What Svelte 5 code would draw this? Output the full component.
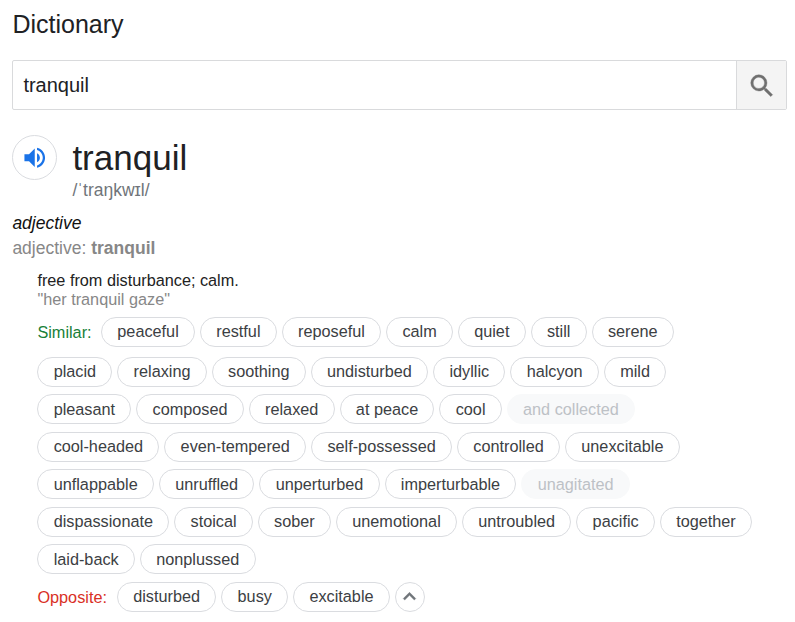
<script>
  const similar = [
    ['peaceful', 'restful', 'reposeful', 'calm', 'quiet', 'still', 'serene'],
    ['placid', 'relaxing', 'soothing', 'undisturbed', 'idyllic', 'halcyon', 'mild'],
    ['pleasant', 'composed', 'relaxed', 'at peace', 'cool', 'and collected'],
    ['cool-headed', 'even-tempered', 'self-possessed', 'controlled', 'unexcitable'],
    ['unflappable', 'unruffled', 'unperturbed', 'imperturbable', 'unagitated'],
    ['dispassionate', 'stoical', 'sober', 'unemotional', 'untroubled', 'pacific', 'together'],
    ['laid-back', 'nonplussed']
  ];
  const opposite = ['disturbed', 'busy', 'excitable'];
  const inactive = new Set(['and collected', 'unagitated']);
</script>

<main>
  <h1>Dictionary</h1>

  <div class="search">
    <div class="query">tranquil</div>
    <button class="go" aria-label="Search">
      <svg width="30" height="30" viewBox="0 0 24 24" fill="#707070" stroke="#707070" stroke-width="0.3">
        <path d="M15.5 14h-.79l-.28-.27A6.471 6.471 0 0 0 16 9.5 6.5 6.5 0 1 0 9.5 16c1.61 0 3.09-.59 4.23-1.57l.27.28v.79l5 4.99L20.49 19l-4.99-5zm-6 0C7.01 14 5 11.99 5 9.5S7.01 5 9.5 5 14 7.01 14 9.5 11.99 14 9.5 14z" />
      </svg>
    </button>
  </div>

  <div class="head">
    <button class="audio" aria-label="Listen">
      <svg width="27.5" height="27.5" viewBox="0 0 24 24" fill="#1a73e8">
        <path d="M3 9v6h4l5 5V4L7 9H3zm13.5 3c0-1.77-1.02-3.29-2.5-4.03v8.05c1.48-.73 2.5-2.25 2.5-4.02zM14 3.23v2.06c2.89.86 5 3.54 5 6.71s-2.11 5.85-5 6.71v2.06c4.01-.91 7-4.49 7-8.77s-2.99-7.86-7-8.77z" />
      </svg>
    </button>
    <div>
      <div class="word">tranquil</div>
      <div class="ipa">/ˈtraŋkwɪl/</div>
    </div>
  </div>

  <div class="pos">adjective</div>
  <div class="forms">adjective: <b>tranquil</b></div>

  <section>
    <div class="definition">free from disturbance; calm.</div>
    <div class="example">"her tranquil gaze"</div>

    <div class="thesaurus">
      {#each similar as row, i}
        <div class="row" class:first={i === 0}>
          {#if i === 0}<span class="label similar">Similar:</span>{/if}
          {#each row as term}
            <span class="chip" class:inactive={inactive.has(term)}>{term}</span>
          {/each}
        </div>
      {/each}
      <div class="row">
        <span class="label opposite">Opposite:</span>
        {#each opposite as term}
          <span class="chip">{term}</span>
        {/each}
        <button class="chip less" aria-label="Show less">
          <svg width="25" height="25" viewBox="0 0 24 24" fill="#70757a" stroke="#70757a" stroke-width="0.4">
            <path d="M12 8l-6 6 1.41 1.41L12 10.83l4.59 4.58L18 14z" />
          </svg>
        </button>
      </div>
    </div>
  </section>
</main>

<style>
  :global(body) { background: #fff; }
  main {
    box-sizing: border-box;
    width: 795px;
    height: 622px;
    overflow: hidden;
    padding: 9px 8px 0 12.4px;
    font-family: "Liberation Sans", Arial, sans-serif;
    color: #202124;
  }
  button { padding: 0; font: inherit; }
  svg { flex: none; }
  h1 { margin: 0; font-size: 25px; font-weight: 400; line-height: 30px; }
  .search {
    display: flex;
    box-sizing: border-box;
    height: 50px;
    margin-top: 21px;
    border: 1px solid #d9dadc;
    border-radius: 2px;
    overflow: hidden;
  }
  .query { flex: 1; padding-left: 10px; font-size: 20px; line-height: 48px; }
  .go {
    display: flex;
    align-items: center;
    justify-content: center;
    width: 50px;
    padding-top: 1.5px;
    border: 0;
    border-left: 1px solid #d9dadc;
    background: #f4f4f4;
  }
  .head { display: flex; gap: 15px; margin-top: 25px; height: 76px; }
  .audio {
    display: flex;
    align-items: center;
    justify-content: center;
    box-sizing: border-box;
    width: 45px;
    height: 45px;
    border: 1px solid #dadce0;
    border-radius: 50%;
    background: #fff;
  }
  .word { font-size: 35px; line-height: 45px; }
  .ipa { font-size: 17.5px; line-height: 20px; color: #70757a; }
  .pos { font-size: 17.5px; line-height: 24px; font-style: italic; color: #111; }
  .forms { font-size: 17.5px; line-height: 27px; color: #878787; }
  section { padding-left: 25px; margin-top: 9px; font-size: 16.25px; }
  .definition, .example { line-height: 19px; }
  .definition { color: #222; }
  .example { color: #878787; }
  .thesaurus { margin-top: 7.9px; }
  .row { display: flex; gap: 5px; height: 30px; margin-bottom: 7.5px; }
  .row.first { margin-bottom: 10px; }
  .label { line-height: 31px; }
  .similar { margin-right: 4.5px; color: #188038; }
  .opposite { margin-right: 5px; color: #d93025; }
  .chip {
    box-sizing: border-box;
    height: 30px;
    padding: 0.35px 15.26px 0;
    border: 1px solid #dadce0;
    border-radius: 15px;
    background: #fff;
    color: #3c4043;
    line-height: 27px;
    white-space: nowrap;
  }
  .inactive { border-color: #f8f9fa; background: #f8f9fa; color: #bdc1c6; }
  .less {
    display: flex;
    align-items: center;
    justify-content: center;
    width: 30px;
    padding: 0 0 1px;
  }
</style>
